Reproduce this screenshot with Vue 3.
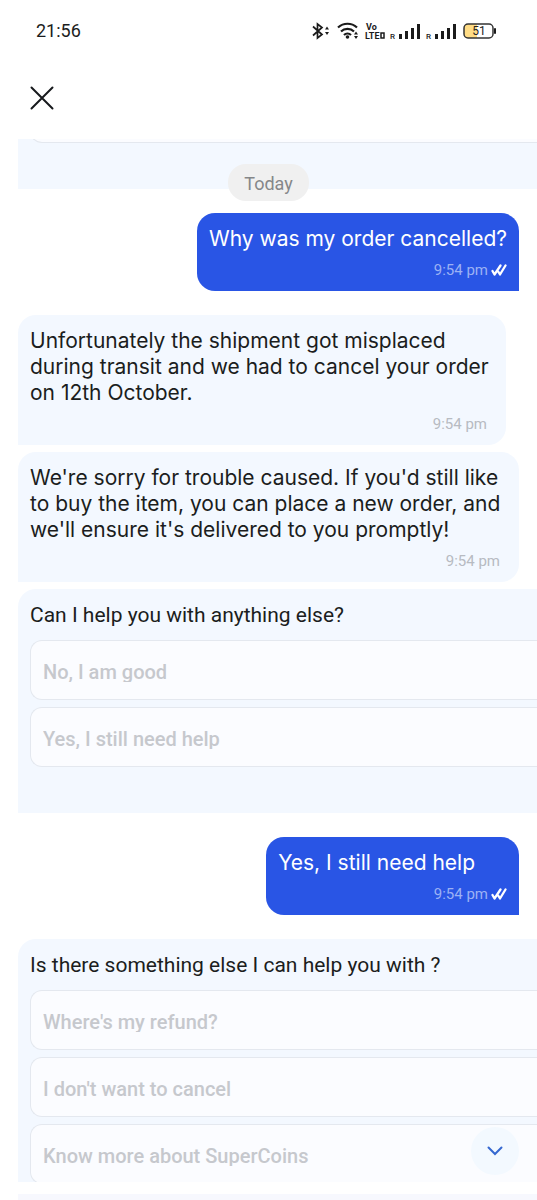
<script setup>
const firstOptions = ['No, I am good', 'Yes, I still need help']
const secondOptions = ["Where's my refund?", "I don't want to cancel", 'Know more about SuperCoins']
</script>

<template>
  <div class="screen">
    <div class="status">
      <span class="clock">21:56</span>
      <svg class="status-icons" width="188" height="24" viewBox="0 0 188 24" aria-hidden="true">
        <g fill="none" stroke="#1b1b1b" stroke-width="2" stroke-linejoin="miter">
          <path d="M4 7.500L13 15.500L8.500 19V5L13 8.500L4 16.500" stroke-width="1.700" />
          <path d="M29 8.500C34.500 3.500 42.500 3.500 48 8.500M32 12.500C35.500 9 41.500 9 45 12.500M35 16C37 14 40 14 42 16" stroke-width="2.200" />
        </g>
        <g fill="#1b1b1b">
          <path d="M16 10.500L18 7.500L20 10.500ZM16 13L18 16L20 13ZM45 15.500L47 12.500L49 15.500ZM45 17L47 20L49 17Z" />
          <circle cx="38.500" cy="18" r="1.800" />
          <rect x="90" y="15" width="3" height="5" /><rect x="96" y="12" width="3" height="8" />
          <rect x="102" y="9" width="3" height="11" /><rect x="108" y="5" width="3" height="15" />
          <rect x="126" y="15" width="3" height="5" /><rect x="132" y="12" width="3" height="8" />
          <rect x="138" y="9" width="3" height="11" /><rect x="144" y="5" width="3" height="15" />
          <rect x="185" y="9" width="2" height="6" rx="1" />
        </g>
        <g fill="#1b1b1b" font-family="Roboto, sans-serif" font-weight="700">
          <text x="57" y="11" font-size="9">Vo</text>
          <text x="81" y="20" font-size="8" font-weight="500">R</text>
          <text x="117" y="20" font-size="8" font-weight="500">R</text>
        </g>
        <g fill="#1b1b1b" font-family="Roboto, sans-serif" font-weight="700">
          <text x="56" y="20" font-size="9">LTE</text>
        </g>
        <rect x="72" y="14" width="3" height="5" fill="none" stroke="#1b1b1b" stroke-width="1.500" />
        <rect x="155" y="5" width="29" height="14" rx="4" fill="#fff" />
        <path d="M159 5H168V19H159Q155 19 155 15V9Q155 5 159 5Z" fill="#ffdc85" />
        <rect x="155" y="5" width="29" height="14" rx="4" fill="none" stroke="#333" stroke-width="1.500" />
        <text x="170" y="16" text-anchor="middle" font-family="Roboto, sans-serif" font-size="12" fill="#222">51</text>
      </svg>
    </div>

    <header class="header">
      <button class="close" aria-label="Close">
        <svg width="24" height="24" viewBox="0 0 24 24" fill="none" stroke="#17191c" stroke-width="2" stroke-linecap="round">
          <path d="M1.500 1.500L22.500 22.500M22.500 1.500L1.500 22.500" />
        </svg>
      </button>
    </header>

    <main class="chat">
      <section class="card card-previous">
        <div class="option option-previous"></div>
      </section>
      <div class="day">Today</div>

      <article class="bubble sent">
        <p>Why was my order cancelled?</p>
        <div class="meta">
          <time>9:54 pm</time>
          <svg class="ticks" width="16" height="14" viewBox="0 0 16 14" fill="none" stroke="#fff" stroke-width="2.300" aria-label="Read">
            <path d="M1.500 8L3.500 11.500L9.500 2.500M7.500 9L9 11.500L14.500 2.500" stroke-linecap="round" stroke-linejoin="round" />
          </svg>
        </div>
      </article>

      <div class="replies">
        <article class="bubble received indented">
          <p>Unfortunately the shipment got misplaced during transit and we had to cancel your order on 12th October.</p>
          <div class="meta"><time>9:54 pm</time></div>
        </article>
        <article class="bubble received">
          <p>We're sorry for trouble caused. If you'd still like to buy the item, you can place a new order, and we'll ensure it's delivered to you promptly!</p>
          <div class="meta"><time>9:54 pm</time></div>
        </article>
        <section class="card">
          <h2>Can I help you with anything else?</h2>
          <button v-for="o in firstOptions" :key="o" class="option" disabled><span>{{ o }}</span></button>
        </section>
      </div>

      <article class="bubble sent">
        <p class="short">Yes, I still need help</p>
        <div class="meta">
          <time>9:54 pm</time>
          <svg class="ticks" width="16" height="14" viewBox="0 0 16 14" fill="none" stroke="#fff" stroke-width="2.300" aria-label="Read">
            <path d="M1.500 8L3.500 11.500L9.500 2.500M7.500 9L9 11.500L14.500 2.500" stroke-linecap="round" stroke-linejoin="round" />
          </svg>
        </div>
      </article>

      <section class="card">
        <h2>Is there something else I can help you with ?</h2>
        <button v-for="o in secondOptions" :key="o" class="option" disabled><span>{{ o }}</span></button>
      </section>

      <button class="scroll-down" aria-label="Scroll to latest">
        <svg width="16" height="10" viewBox="0 0 16 10" fill="none" stroke="#3568d0" stroke-width="2" stroke-linecap="round">
          <path d="M1.500 1.500L8 8L14.500 1.500" />
        </svg>
      </button>
    </main>

    <footer class="composer"><div class="composer-edge"></div></footer>
  </div>
</template>

<style>
body {
  background: #fff;
}
</style>

<style scoped>
.screen {
  display: flex;
  flex-direction: column;
  height: 100vh;
  overflow: hidden;
  background: #fff;
  color: #1b1d20;
  font-family: Roboto, "Liberation Sans", sans-serif;
}
.screen * {
  box-sizing: border-box;
}
.status {
  flex: none;
  display: flex;
  align-items: center;
  justify-content: space-between;
  height: 62px;
  padding: 0 40px 0 36px;
}
.clock {
  font-size: 18px;
  line-height: 24px;
}
.header {
  flex: none;
  height: 77px;
  padding: 24px 30px;
}
button {
  margin: 0;
  padding: 0;
  border: 0;
  background: none;
  font-family: inherit;
}
.close {
  display: block;
  width: 24px;
  height: 24px;
}
.chat {
  position: relative;
  flex: 1;
  min-height: 0;
  display: flex;
  flex-direction: column;
  padding-left: 18px;
  overflow: hidden;
}
.chat > * {
  flex: none;
}
.card {
  padding: 13px 0 46px 12px;
  border-radius: 18px 0 0 0;
  background: #f3f8ff;
  overflow: hidden;
}
.card h2 {
  margin: 0 0 12px;
  font-size: 21px;
  font-weight: 400;
  line-height: 26px;
}
.option {
  display: block;
  width: 100%;
  height: 60px;
  padding: 3px 12px 0;
  border: 1px solid #e4e8ef;
  border-width: 1px 0 1px 1px;
  border-radius: 12px 0 0 12px;
  background: #fbfcff;
  color: #c6c8cd;
  font-size: 20px;
  font-weight: 500;
  line-height: 20px;
  text-align: left;
}
.option span {
  display: block;
  overflow: hidden;
}
.option + .option {
  margin-top: 7px;
}
.card-previous {
  padding: 0 0 46px 12px;
  border-radius: 0;
}
.option-previous {
  margin-top: -56px;
}
.day {
  position: relative;
  align-self: center;
  margin: -25px 18px 12px 0;
  padding: 2px 16px 0;
  border-radius: 18px;
  background: #f0f0f0;
  color: #858789;
  font-size: 18px;
  line-height: 35px;
}
.bubble p {
  margin: 0;
  font-family: Inter, Roboto, sans-serif;
  font-size: 21px;
  line-height: 26px;
}
.bubble {
  padding: 13px 12px 11px;
}
.sent {
  align-self: flex-end;
  margin: 0 18px 24px 0;
  border-radius: 18px 18px 0 18px;
  background: #2955e5;
  color: #fff;
}
.sent .short {
  padding-right: 32px;
}
.meta {
  display: flex;
  align-items: center;
  justify-content: flex-end;
  gap: 3px;
  margin-top: 8px;
  color: #9cb1f4;
  font-size: 15px;
  line-height: 20px;
}
.replies {
  display: flex;
  flex-direction: column;
  gap: 7px;
  margin-bottom: 24px;
}
.received {
  margin-right: 18px;
  border-radius: 18px 18px 18px 0;
  background: #f3f8ff;
}
.received.indented {
  margin-right: 31px;
}
.received .meta {
  padding-right: 7px;
  color: #b7bbc2;
}
.scroll-down {
  position: absolute;
  right: 18px;
  bottom: 7px;
  display: flex;
  align-items: center;
  justify-content: center;
  width: 48px;
  height: 48px;
  border-radius: 50%;
  background: #f3f9ff;
}
.composer {
  flex: none;
  height: 18px;
  padding: 12px 0 0 18px;
}
.composer-edge {
  height: 6px;
  padding-left: 18px;
  background: #f7f8fe;
}
.composer-edge::after {
  content: "";
  display: block;
  height: 6px;
  border-bottom: 1px solid #e4e5ef;
}
</style>
